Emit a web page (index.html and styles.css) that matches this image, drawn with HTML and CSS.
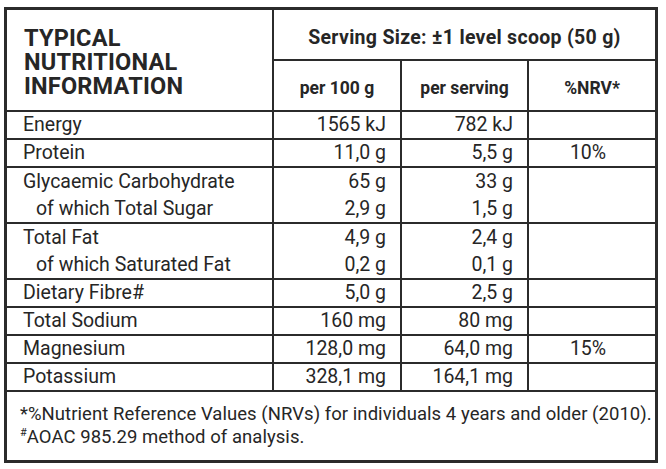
FILE: index.html
```html
<!DOCTYPE html>
<html lang="en">
<head>
<meta charset="utf-8">
<title>Typical Nutritional Information</title>
<link rel="stylesheet" href="styles.css">
</head>
<body>
<div class="nip">
  <div class="cell title">
    <span class="title-line">TYPICAL</span>
    <span class="title-line">NUTRITIONAL</span>
    <span class="title-line">INFORMATION</span>
  </div>
  <div class="cell serving">Serving Size: ±1 level scoop (50 g)</div>
  <div class="cell sub">per 100 g</div>
  <div class="cell sub">per serving</div>
  <div class="cell sub">%NRV*</div>

  <div class="cell label">Energy</div>
  <div class="cell num">1565 kJ</div>
  <div class="cell num">782 kJ</div>
  <div class="cell nrv"></div>

  <div class="cell label">Protein</div>
  <div class="cell num">11,0 g</div>
  <div class="cell num">5,5 g</div>
  <div class="cell nrv">10%</div>

  <div class="cell label double">Glycaemic Carbohydrate<br><span class="indent">of which Total Sugar</span></div>
  <div class="cell num double">65 g<br>2,9 g</div>
  <div class="cell num double">33 g<br>1,5 g</div>
  <div class="cell nrv"></div>

  <div class="cell label double">Total Fat<br><span class="indent">of which Saturated Fat</span></div>
  <div class="cell num double">4,9 g<br>0,2 g</div>
  <div class="cell num double">2,4 g<br>0,1 g</div>
  <div class="cell nrv"></div>

  <div class="cell label">Dietary Fibre#</div>
  <div class="cell num">5,0 g</div>
  <div class="cell num">2,5 g</div>
  <div class="cell nrv"></div>

  <div class="cell label">Total Sodium</div>
  <div class="cell num">160 mg</div>
  <div class="cell num">80 mg</div>
  <div class="cell nrv"></div>

  <div class="cell label">Magnesium</div>
  <div class="cell num">128,0 mg</div>
  <div class="cell num">64,0 mg</div>
  <div class="cell nrv">15%</div>

  <div class="cell label">Potassium</div>
  <div class="cell num">328,1 mg</div>
  <div class="cell num">164,1 mg</div>
  <div class="cell nrv"></div>

  <div class="cell foot">
    <p class="foot-line">*%Nutrient Reference Values (NRVs) for individuals 4 years and older (2010).</p>
    <p class="foot-line"><sup class="hash">#</sup>AOAC 985.29 method of analysis.</p>
  </div>
</div>
</body>
</html>
```

FILE: styles.css
```css
html, body {
  margin: 0;
  background: #ffffff;
}

body {
  padding: 7px 0 0 4px;
  font-family: Roboto, "Liberation Sans", Arial, sans-serif;
  color: #262626;
}

.nip {
  width: 654px;
  box-sizing: border-box;
  display: grid;
  grid-template-columns: 265px 126px 125px 126px;
  grid-template-rows: 49px 49px 26px 26px 54px 54px 26px 26px 26px 26px 68px;
  gap: 2px;
  padding: 3px;
  background: #2b2b2b;
}

.cell {
  background: #ffffff;
  box-sizing: border-box;
  font-size: 19.5px;
  line-height: 26px;
}

.title {
  grid-row: 1 / 3;
  display: flex;
  flex-direction: column;
  font-size: 23.5px;
  font-weight: 700;
  padding: 18px 0 0 17px;
  letter-spacing: 0.2px;
}

.title-line {
  display: block;
  height: 24.2px;
  line-height: 20px;
}

.serving {
  grid-column: 2 / 5;
  font-size: 19.5px;
  font-weight: 700;
  letter-spacing: 0.3px;
  text-align: center;
  padding-top: 15px;
}

.sub {
  font-size: 17.5px;
  font-weight: 700;
  text-align: center;
  padding-top: 14px;
}

.label {
  padding-left: 16px;
}

.num {
  text-align: right;
  padding-right: 14px;
}

.nrv {
  text-align: center;
  padding-right: 8px;
}

.double {
  line-height: 27px;
}

.indent {
  padding-left: 13px;
}

.foot {
  grid-column: 1 / 5;
  padding: 11px 0 0 13px;
  font-size: 18.5px;
  line-height: 23px;
}

.foot-line {
  margin: 0;
  letter-spacing: 0.05px;
}

.hash {
  font-size: 11px;
  line-height: 0;
  vertical-align: 7px;
}
```
